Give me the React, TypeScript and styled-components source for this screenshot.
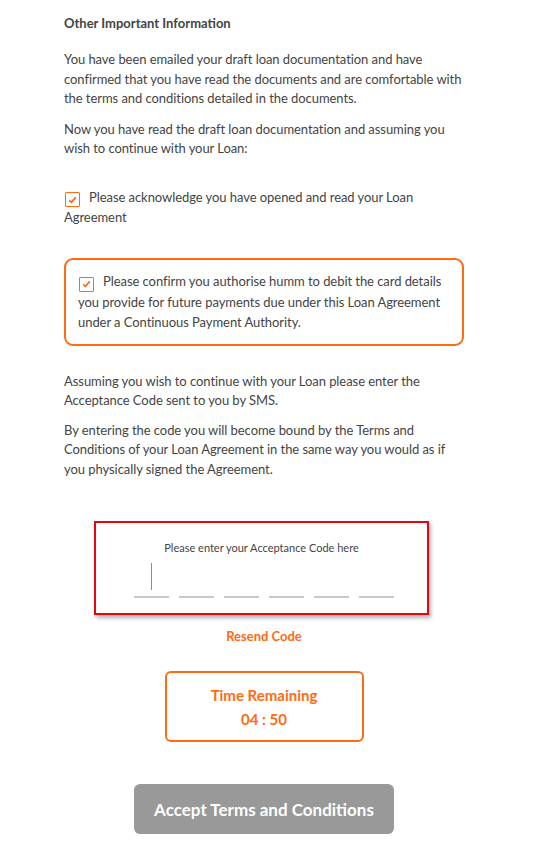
import React from 'react';
import styled, { createGlobalStyle } from 'styled-components';

const GlobalStyle = createGlobalStyle`
  body {
    margin: 0;
    background: #fff;
    font-family: Lato, "Open Sans", sans-serif;
    color: #444;
  }
`;

const ORANGE = '#ff6a13';

const Page = styled.div`
  width: 400px;
  margin-left: 64px;
  padding-top: 14px;
  padding-bottom: 12px;
`;

const Heading = styled.div`
  font-size: 13px;
  font-weight: 700;
  line-height: 19px;
  margin-bottom: 17px;
`;

const Para = styled.p<{ gap?: number; top?: number }>`
  margin: ${p => p.top ?? 0}px 0 ${p => p.gap ?? 10}px;
  font-size: 13px;
  line-height: 19.5px;
  letter-spacing: -0.06px;
`;

const CheckRow = styled.div<{ boxed?: boolean }>`
  font-size: 13px;
  letter-spacing: -0.06px;
  line-height: ${p => (p.boxed ? '20.5px' : '20px')};
  ${p =>
    p.boxed
      ? `
    border: 2px solid ${ORANGE};
    border-radius: 9px;
    padding: 11px 12px 11px 12px;
  `
      : ''}
`;

const Spacer = styled.div<{ h: number }>`
  height: ${p => p.h}px;
`;

const Box = styled.span`
  display: inline-flex;
  align-items: center;
  justify-content: center;
  width: 13px;
  height: 13px;
  border: 1px solid ${ORANGE};
  border-radius: 1px;
  margin: 0 9px 0 1px;
  vertical-align: -2px;
`;

const CodeCard = styled.div`
  width: 331px;
  margin: 42px 0 0 30px;
  border: 2px solid #e30613;
  box-shadow: 2px 3px 4px rgba(0, 0, 0, 0.3);
  padding: 18px 0 15px;
  display: flex;
  flex-direction: column;
  align-items: center;
`;

const CodeLabel = styled.div`
  font-size: 11px;
  line-height: 14px;
  color: #444;
`;

const Slots = styled.div`
  display: flex;
  gap: 10px;
  margin-top: 8px;
  margin-left: 5px;
`;

const Slot = styled.div<{ active?: boolean }>`
  width: 35px;
  height: 33px;
  border-bottom: 2px solid #c8c8c8;
  position: relative;
  &::after {
    content: '';
    display: ${p => (p.active ? 'block' : 'none')};
    position: absolute;
    left: 17px;
    top: 0;
    width: 1px;
    height: 27px;
    background: ${ORANGE};
  }
`;

const Resend = styled.div`
  text-align: center;
  color: ${ORANGE};
  font-size: 13px;
  font-weight: 700;
  margin-top: 13px;
  line-height: 16px;
`;

const Timer = styled.div`
  width: 195px;
  height: 67px;
  margin: 27px auto 0;
  border: 2px solid ${ORANGE};
  border-radius: 6px;
  color: ${ORANGE};
  font-weight: 700;
  font-size: 15px;
  line-height: 24px;
  display: flex;
  flex-direction: column;
  align-items: center;
  justify-content: center;
`;

const AcceptButton = styled.button`
  display: block;
  width: 260px;
  height: 50px;
  margin: 42px auto 0;
  border: none;
  border-radius: 6px;
  background: #999;
  color: #fff;
  font-family: Lato, sans-serif;
  font-weight: 700;
  font-size: 17px;
`;

function Check() {
  return (
    <Box>
      <svg width="9" height="8" viewBox="0 0 9 8">
        <path d="M1.2 4.3 L3.4 6.3 L7.8 1.4" stroke={ORANGE} strokeWidth="1.8" fill="none" />
      </svg>
    </Box>
  );
}

export default function App() {
  return (
    <>
      <GlobalStyle />
      <Page>
        <Heading>Other Important Information</Heading>
        <Para gap={11}>
          You have been emailed your draft loan documentation and have confirmed that you have read
          the documents and are comfortable with the terms and conditions detailed in the documents.
        </Para>
        <Para gap={28}>
          Now you have read the draft loan documentation and assuming you wish to continue with your
          Loan:
        </Para>
        <CheckRow>
          <Check />
          Please acknowledge you have opened and read your Loan Agreement
        </CheckRow>
        <Spacer h={31} />
        <CheckRow boxed>
          <Check />
          Please confirm you authorise humm to debit the card details you provide for future
          payments due under this Loan Agreement under a Continuous Payment Authority.
        </CheckRow>
        <Para gap={10} top={26}>
          Assuming you wish to continue with your Loan please enter the Acceptance Code sent to you
          by SMS.
        </Para>
        <Para gap={0}>
          By entering the code you will become bound by the Terms and Conditions of your Loan
          Agreement in the same way you would as if you physically signed the Agreement.
        </Para>
        <CodeCard>
          <CodeLabel>Please enter your Acceptance Code here</CodeLabel>
          <Slots>
            {[0, 1, 2, 3, 4, 5].map(i => (
              <Slot key={i} active={i === 0} />
            ))}
          </Slots>
        </CodeCard>
        <Resend>Resend Code</Resend>
        <Timer>
          <div>Time Remaining</div>
          <div>04 : 50</div>
        </Timer>
        <AcceptButton>Accept Terms and Conditions</AcceptButton>
      </Page>
    </>
  );
}
